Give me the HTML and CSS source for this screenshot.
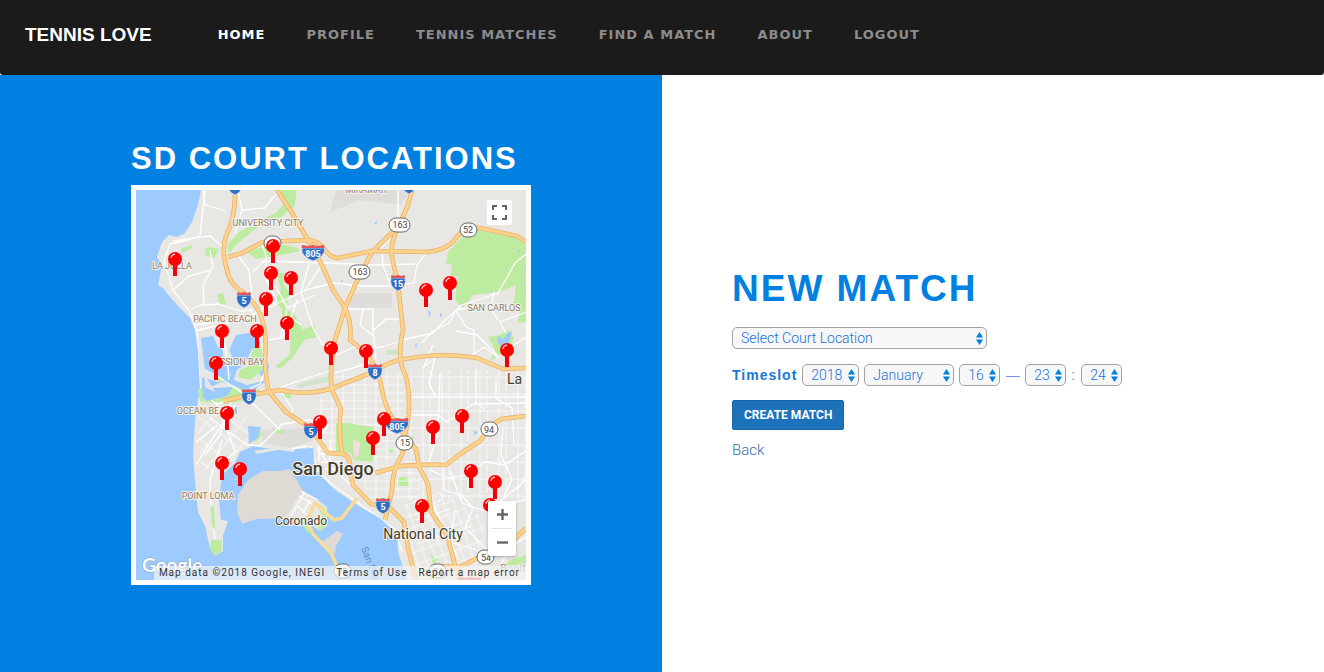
FILE: index.html
```html
<!DOCTYPE html>
<html lang="en">
<head>
<meta charset="utf-8">
<meta name="viewport" content="width=device-width, initial-scale=1">
<title>Tennis Love</title>
<link rel="stylesheet" href="styles.css">
</head>
<body>
<header class="navbar">
  <a class="brand" href="#">TENNIS LOVE</a>
  <nav class="nav-links">
    <a class="nav-link active" href="#">HOME</a>
    <a class="nav-link" href="#">PROFILE</a>
    <a class="nav-link" href="#">TENNIS MATCHES</a>
    <a class="nav-link" href="#">FIND A MATCH</a>
    <a class="nav-link" href="#">ABOUT</a>
    <a class="nav-link" href="#">LOGOUT</a>
  </nav>
</header>
<main class="split">
  <section class="panel courts">
    <div class="courts-inner">
      <h2 class="courts-title">SD COURT LOCATIONS</h2>
      <div class="map">
        <svg class="map-canvas" viewBox="136 190 390 390" role="img" aria-label="Map of San Diego courts">
          <defs>
            <pattern id="grid" width="11" height="8" patternUnits="userSpaceOnUse"><path d="M0 1H11M2 0V8" class="street thin"/></pattern>
            <pattern id="blocks" width="19" height="17" patternUnits="userSpaceOnUse"><path d="M0 3H19M5 0V17M12 3V17" class="street thin"/></pattern>
            <pattern id="tilt" width="9" height="12" patternUnits="userSpaceOnUse" patternTransform="rotate(-20)"><path d="M0 1H9M2 0V12" class="street thin"/></pattern>
            <pattern id="diag" width="14" height="17" patternUnits="userSpaceOnUse" patternTransform="rotate(38)"><path d="M0 2H14M3 0V17" class="street thin"/></pattern>
            <g id="pin"><path d="M0 5V17" stroke="#f0000c" stroke-width="4"/><circle r="7" fill="#f00"/><path d="M-4-1Q-4-4 0-5" fill="none" stroke="#ffc4c4" stroke-width="1.3"/></g>
            <g id="shield"><path d="M-7-4H7Q9 5 0 9Q-9 5-7-4Z" fill="#2f70c5" stroke="#e8edf5" stroke-width=".7"/><path d="M-6.5-7L-3.5-6L0-7L3.5-6L6.500-7L7-4H-7Z" fill="#e2535a"/></g>
            <g id="wide-shield"><path d="M-11-4H11.500Q13 4 0 9Q-13 4-11-4Z" fill="#2f70c5" stroke="#e8edf5" stroke-width=".7"/><path d="M-11-7L-5-6L0-7L5-6L11-7L11.500-4H-11.500Z" fill="#e2535a"/></g>
            <g id="highways">
              <path d="M235 190Q236 215 226 236Q221 250 227 270Q229 284 243 292Q260 306 264 327Q267 340 265 360Q266 382 269 392L286 412L310 428L328 453L342 454Q351 455 350 469L353 485L371 504L389 507L404 522L408 548L416 580"/>
              <path d="M228 257L242 253L263 242L308 240Q320 241 325 250Q331 258 338 258L372 251L427 252Q448 250 456 238Q464 227 480 228L517 236L526 242"/>
              <path d="M277 190L292 213L308 240L322 265L333 290L345 308Q352 322 350 340Q366 352 370 358Q380 374 382 390Q387 414 396 422L405 437L416 449L419 467L428 484L431 512L447 535L455 565L460 580"/>
              <path d="M412 190L408 205L398 228Q390 244 392 257L398 285L403 330Q398 352 402 367Q409 380 409 400Q410 423 402 443L403 453Q392 470 392 490L385 520"/>
              <path d="M400 225L372 252L355 285L345 308L335 340Q329 375 332 390L341 409Q338 430 342 455"/>
              <path d="M223 401L245 396L280 390Q303 396 330 389L353 380L373 372Q392 360 405 359Q444 352 477 358L503 369L526 368"/>
              <path d="M375 473L400 466Q435 464 446 465L463 452L480 441L492 425L501 419L526 416"/>
              <path d="M426 573L443 566L460 567L481 556L505 548L526 528"/>
            </g>
          </defs>
          <rect x="136" y="190" width="390" height="390" fill="#e8e7e4"/>
          <g fill="#deddda">
            <path d="M336 190H412L400 205L360 200L330 212Z M350 293H392V308H350Z M262 430L304 428L313 440L290 448L262 443Z"/>
          </g>
          <!-- parks -->
          <g fill="#bdeb9f">
            <path d="M448 252L463 236L476 230L517 238L527 246V254L523 262L498 292L473 295L463 308L455 300L458 276L451 276L452 264L446 264Z"/>
            <path d="M517 240L526 246V322L518 323L520 310L513 309L516 285L500 292Z"/>
            <path d="M488 337L500 335L509 330L514 338L510 348L499 355L490 361L495 350Z"/>
            <path d="M336 423H348L373 427V462L354 460L351 453L336 451Z"/>
            <path d="M288 210L294 208L297 190H275L284 204L276 213L262 219L282 217Z"/>
            <path d="M227 245L240 231L252 226L258 227L238 243L229 254Z M247 252L262 247L287 245L297 248L300 251L287 254L256 259Z"/>
            <path d="M277 273L284 273L283 283L290 294L285 308L294 314L303 330L314 324L317 337L304 340L293 357L280 369L276 366L290 354L291 333L282 324L282 309L275 301L281 290Z"/>
            <path d="M181 249L191 245L192 248L182 253Z M205 249L210 247L219 249L214 258L206 256Z M217 295L223 293L226 305L220 304Z"/>
            <path d="M398 477H409V486H398Z M398 440L408 434L407 440L415 435L410 442Z M385 449L395 448L392 453Z"/>
            <path d="M253 440L260 431L263 433L256 443Z M273 428L285 431L284 434L273 432Z M510 560L526 555V572L505 566Z M430 554L439 560L434 566Z"/>
            <path d="M203 402L222 388L246 386L260 390V396L228 404Z M282 394H291V398H283Z"/>
          </g>
          <path d="M353 439L360 443L359 455L354 458Z" fill="#f3dde2"/>
          <path d="M387 350H400V355H386Z M297 384L330 376V381L299 388Z" fill="#cfe3cd"/>
          <!-- minor streets -->
          <path d="M336 372H404V463H374V427L336 422Z" fill="url(#grid)"/>
          <path d="M405 370H526V500H405Z" fill="url(#blocks)"/>
          <path d="M320 397H336V455L315 447Z M355 465H420V500H370Z" fill="url(#grid)"/>
          <path d="M404 505L440 492L486 520L480 567H414Z" fill="url(#tilt)"/>
          <path d="M197 418L225 397L259 425L240 450L222 475L202 470Z M303 492L329 498L325 521L308 522L295 507Z" fill="url(#diag)"/>
          <g class="street">
            <path d="M205 190L200 236L188 240L170 244L164 261L173 290L190 312L197 332L200 390"/>
            <path d="M173 241L210 236L224 248M226 211L205 205L203 190M238 190L242 210L265 208L279 190M242 210L235 233"/>
            <path d="M210 250L213 267L203 285L204 304L191 309M210 270L189 276L173 290M204 305L219 304L240 311L253 310"/>
            <path d="M195 325L232 320L254 315L280 302L306 290L333 283L362 286L390 286L414 283L417 265L427 252"/>
            <path d="M194 331L229 323M222 339L225 380M225 364L209 373M235 252L249 270L253 302M253 272L264 261L330 263L372 265L415 264"/>
            <path d="M262 245L266 255L266 272L281 296L287 308L315 295M309 265L301 292L313 328L323 345M323 263L304 292"/>
            <path d="M264 275L277 301L250 315M267 340L282 338L289 325M287 310L280 338M298 299L291 317L301 325"/>
            <path d="M398 190V228L382 247L383 265L390 284M352 285L344 309H373V331L386 319H402M373 330L376 358L360 366L335 373"/>
            <path d="M363 310L360 325L373 336M333 293L350 318M336 355L355 347L363 349L383 347L402 340L433 333L447 318L462 305L498 293L515 263L526 254"/>
            <path d="M422 343L433 331L449 323L456 310L480 305L491 310L500 322L506 333M433 345L423 369M456 311L466 327L474 330V353M456 331L477 335L498 356"/>
            <path d="M491 308L494 292M500 322L526 312M507 350L526 337M472 355L484 347L499 358M422 368L435 358L429 383L436 398"/>
            <path d="M269 392L295 382L330 371M217 372L204 360M216 373L240 391L280 430M200 390L216 404L269 392M216 402L235 451"/>
            <path d="M210 418L247 445L260 446L282 424L310 420L328 427L316 440M280 390L293 410L289 416M231 402L220 435L205 455"/>
            <path d="M218 425L196 442M235 405L215 435L196 465M222 440L210 480L211 510L215 539M237 450L222 464M253 447L284 450L308 446"/>
            <path d="M310 445L317 470L331 484L350 497L378 517L395 529L402 552M317 448L330 466L350 484L378 508"/>
            <path d="M321 462H340M320 454H336M325 469H344M319 439L319 461M330 439V470"/>
            <path d="M430 470L448 478L466 475L485 462L505 465L526 451M444 463V490L461 495L473 508L465 528L487 550"/>
            <path d="M503 427L501 455L512 479L500 505L526 500M405 415H438L447 422L473 404L526 403M412 397H526M440 374L438 433L428 465"/>
            <path d="M476 369V403L485 409M496 380V398L512 408L514 445M450 470L462 503L487 512L526 480M455 510L450 542L476 550"/>
            <path d="M517 490L526 476M500 565L512 546L526 537M441 500L433 504L459 560M416 520L450 509M417 544L471 526"/>
          </g>
          <!-- ocean and bays -->
          <g fill="#9dcaff">
            <path d="M136 190H201L198 205L192 222L185 233L177 237L169 235L162 242L157 257L162 265L158 285L164 289L170 297L180 308L190 318L195 330L198 350L200 388L195 420L193 455L195 482L198 512L205 526L210 548L215 556L223 551L223 536L228 521L221 520L219 500L222 475L235 463L240 452L253 446L282 450L313 448L315 470L335 490L362 508L380 518L397 534L398 552L407 580H136Z"/>
            <path d="M201 338L213 336L218 347L223 350L224 362L231 377L220 380L205 370Z"/>
            <path d="M229 350L236 335L249 333L260 340L261 347L252 349L245 364L237 370L234 380L247 385L267 380L259 374L264 355L269 366L266 381L251 392L222 382L202 391V377L218 382L231 375L224 363L232 356Z"/>
            <path d="M248 426L261 427L258 438L249 444Z M136 392L233 387L227 396L207 401L197 395Z"/>
            <path d="M341 280L343 279L342 283ZM428 310L431 313L429 318ZM440 313L443 315L440 317ZM415 344L417 343L416 349ZM473 431L478 432L475 435ZM499 336L503 340L507 334L512 331L508 345L501 347L497 341Z"/>
            <path d="M374 223L377 221L376 225ZM518 250L520 250L519 253Z"/>
          </g>
          <g fill="#bdeb9f">
            <path d="M262 342L263 370L250 380L238 377L240 370L249 366L249 360L254 348Z M214 374L225 379L220 383Z"/>
            <path d="M211 540L222 540L221 551L215 556L210 549Z M210 505L214 507L215 530L212 526Z M198 389L200 401L204 404L202 388Z"/>
          </g>
          <path d="M202 336L205 387L215 392L204 374Z" fill="#e8e7e4"/>
          <path d="M222 330L227 358L229 380M205 370L217 376L244 394M258 333L267 366L260 384L249 389" class="street"/>
          <path d="M254 451L278 447L295 449L294 452L278 450L257 454Z" fill="#e8e7e4"/>
          <!-- Coronado -->
          <path d="M290 469L281 471L263 471L248 480L238 495L237 512L242 524L257 519L285 518L292 510L303 491Z" fill="#dfdad4"/>
          <path d="M303 491L318 500L327 507V526L320 531L310 524L300 526L286 517L293 505Z" fill="#e8e7e4"/>
          <path d="M316 502L325 508L327 525L320 531L316 525L323 518Z M300 522L306 522L312 531L309 534Z" fill="#bdeb9f"/>
          <path d="M322 542L337 531L343 534L336 546L335 554L326 547Z" fill="#dfdad4"/>
          <path d="M301 491L318 500M299 496L314 505M304 493L291 516M298 506L309 517M310 500L303 513" class="street"/>
          <path d="M235 480L246 472" stroke="#bdeb9f" stroke-width="1.500"/>
          <!-- highways: casing below, core above -->
          <use href="#highways" class="road-casing"/>
          <use href="#highways" class="road-core"/>
          <path d="M357 498L342 518L334 520L315 503L307 520L313 534L331 553L341 575" fill="none" stroke="#f7dd98" stroke-width="3.500"/>
          <!-- route markers -->
          <use href="#shield" x="235" y="186"/><use href="#shield" x="409" y="185"/>
          <use href="#shield" x="244" y="299"/><use href="#shield" x="398" y="282"/><use href="#shield" x="375" y="371"/><use href="#shield" x="249" y="396"/><use href="#shield" x="311" y="430"/><use href="#shield" x="383" y="505"/>
          <use href="#wide-shield" x="313" y="252"/><use href="#wide-shield" x="397" y="425"/><use href="#wide-shield" x="470" y="584"/>
          <g class="shield-text">
            <text x="244" y="304">5</text><text x="398" y="287">15</text><text x="375" y="376">8</text><text x="249" y="401">8</text><text x="311" y="435">5</text><text x="383" y="510">5</text><text x="313" y="257">805</text><text x="397" y="430">805</text>
          </g>
          <g class="route-badge">
            <rect x="389" y="218" width="21" height="14" rx="7"/><rect x="349" y="265" width="21" height="14" rx="7"/><rect x="460" y="223" width="17" height="14" rx="7"/><rect x="264" y="236" width="17" height="14" rx="7"/><rect x="481" y="422" width="17" height="14" rx="7"/><rect x="396" y="436" width="17" height="14" rx="7"/><rect x="477" y="550" width="17" height="14" rx="7"/><rect x="334" y="564" width="17" height="14" rx="7"/><rect x="429" y="564" width="17" height="14" rx="7"/>
          </g>
          <g class="route-text">
            <text x="400" y="228">163</text><text x="360" y="275">163</text><text x="468" y="233">52</text><text x="489" y="433">94</text><text x="405" y="446">15</text><text x="486" y="561">54</text><text x="342" y="575">75</text><text x="438" y="575">54</text>
          </g>
          <g class="area-label">
            <text x="366" y="193">MIRAMAR</text><text x="268" y="226">UNIVERSITY CITY</text><text x="172" y="269">LA JOLLA</text><text x="225" y="322">PACIFIC BEACH</text><text x="237" y="365">MISSION BAY</text><text x="207" y="414">OCEAN BEACH</text><text x="208" y="499">POINT LOMA</text><text x="494" y="311">SAN CARLOS</text>
          </g>
          <g class="city-label">
            <text x="507" y="384" class="city-start">La</text><text x="301" y="525" class="city-small">Coronado</text><text x="423" y="539">National City</text><text x="333" y="475" class="city-main">San Diego</text><text x="500" y="572" class="city-start bonita">Bonita</text>
          </g>
          <text class="water-label" transform="translate(361 548) rotate(70)">San Diego Bay</text>
          <text x="142" y="572" class="google-mark">Google</text>
          <!-- court pins -->
          <use href="#pin" x="490" y="505"/><use href="#pin" x="175" y="259"/><use href="#pin" x="273" y="246"/><use href="#pin" x="271" y="273"/><use href="#pin" x="291" y="278"/><use href="#pin" x="266" y="299"/><use href="#pin" x="287" y="323"/><use href="#pin" x="222" y="331"/><use href="#pin" x="257" y="331"/><use href="#pin" x="216" y="363"/><use href="#pin" x="331" y="348"/><use href="#pin" x="366" y="351"/><use href="#pin" x="426" y="290"/><use href="#pin" x="450" y="283"/><use href="#pin" x="507" y="350"/><use href="#pin" x="227" y="413"/><use href="#pin" x="222" y="463"/><use href="#pin" x="240" y="469"/><use href="#pin" x="320" y="422"/><use href="#pin" x="384" y="419"/><use href="#pin" x="373" y="438"/><use href="#pin" x="433" y="427"/><use href="#pin" x="462" y="416"/><use href="#pin" x="471" y="471"/><use href="#pin" x="495" y="482"/><use href="#pin" x="422" y="506"/>
        </svg>
        <button class="map-button fullscreen" type="button" aria-label="Toggle fullscreen">
          <svg width="17" height="17" viewBox="0 0 17 17"><path d="M2 6V2H6M11 2H15V6M15 11V15H11M6 15H2V11" fill="none" stroke="#666" stroke-width="2"/></svg>
        </button>
        <div class="zoom">
          <button class="map-button zoom-button" type="button" aria-label="Zoom in"><svg width="11" height="11" viewBox="0 0 11 11"><path d="M0 5.500H11M5.500 0V11" stroke="#666" stroke-width="2.400"/></svg></button>
          <button class="map-button zoom-button" type="button" aria-label="Zoom out"><svg width="11" height="11" viewBox="0 0 11 11"><path d="M0 5.500H11" stroke="#666" stroke-width="2.400"/></svg></button>
        </div>
        <div class="attribution">
          <span>Map data ©2018 Google, INEGI</span><a href="#">Terms of Use</a><a href="#">Report a map error</a>
        </div>
      </div>
    </div>
  </section>
  <section class="panel match">
    <form class="match-form">
      <h1 class="match-title">NEW MATCH</h1>
      <span class="select-box court"><select aria-label="Court location"><option>Select Court Location</option></select><svg class="arrows" viewBox="0 0 7 13"><path d="M3.500 0L7 5.500H0ZM3.500 13L0 7.500H7Z"/></svg></span>
      <div class="timeslot">
        <label class="timeslot-label" for="year">Timeslot</label>
        <span class="select-box year"><select id="year"><option>2018</option></select><svg class="arrows" viewBox="0 0 7 13"><path d="M3.500 0L7 5.500H0ZM3.500 13L0 7.500H7Z"/></svg></span>
        <span class="select-box month"><select aria-label="Month"><option>January</option></select><svg class="arrows" viewBox="0 0 7 13"><path d="M3.500 0L7 5.500H0ZM3.500 13L0 7.500H7Z"/></svg></span>
        <span class="select-box short"><select aria-label="Day"><option>16</option></select><svg class="arrows" viewBox="0 0 7 13"><path d="M3.500 0L7 5.500H0ZM3.500 13L0 7.500H7Z"/></svg></span>
        <span class="separator dash">—</span>
        <span class="select-box short"><select aria-label="Hour"><option>23</option></select><svg class="arrows" viewBox="0 0 7 13"><path d="M3.500 0L7 5.500H0ZM3.500 13L0 7.500H7Z"/></svg></span>
        <span class="separator">:</span>
        <span class="select-box short"><select aria-label="Minute"><option>24</option></select><svg class="arrows" viewBox="0 0 7 13"><path d="M3.500 0L7 5.500H0ZM3.500 13L0 7.500H7Z"/></svg></span>
      </div>
      <button class="create" type="submit">CREATE MATCH</button>
      <a class="back" href="#">Back</a>
    </form>
  </section>
</main>
</body>
</html>
```
FILE: styles.css
```css
* { box-sizing: border-box; }
body {
  margin: 0;
  background: #fff;
  font-family: "Liberation Sans", Arial, sans-serif;
  color: #0080e0;
}
a { text-decoration: none; }

.navbar {
  display: flex;
  align-items: center;
  gap: 66px;
  min-height: 75px;
  padding: 0 25px 6px;
  background: #1b1b1b;
  border-radius: 0 0 3px 3px;
}
.brand { color: #fff; font-size: 19px; font-weight: bold; white-space: nowrap; }
.nav-links { display: flex; flex-wrap: wrap; gap: 4px 41px; }
.nav-link {
  color: #8c8c8c;
  font-family: "DejaVu Sans", Verdana, sans-serif;
  font-size: 13px;
  font-weight: bold;
  letter-spacing: 1px;
  white-space: nowrap;
}
.nav-link.active { color: #fff; }

.split { display: grid; grid-template-columns: 1fr 1fr; min-height: calc(100vh - 75px); }
.courts { background: #0080e0; padding: 66px 20px 40px; }
.courts-inner { max-width: 400px; margin: 0 auto; }
.courts-title {
  margin: 0 0 8px;
  color: #fff;
  font-size: 31px;
  line-height: 36px;
  letter-spacing: 2px;
  white-space: nowrap;
}
.map { position: relative; border: 5px solid #fff; overflow: hidden; }
.map-canvas { display: block; width: 100%; height: auto; font-family: Roboto, sans-serif; }

.street { fill: none; stroke: #fff; stroke-width: 1.3px; stroke-linejoin: round; }
.street.thin { stroke-width: 0.7px; }
.road-casing { fill: none; stroke: #e9b06c; stroke-width: 4.6px; stroke-linejoin: round; }
.road-core { fill: none; stroke: #fdd38c; stroke-width: 3px; stroke-linejoin: round; }
.shield-text { fill: #fff; font-size: 9px; font-weight: bold; text-anchor: middle; }
.route-badge { fill: #fff; stroke: #666; stroke-width: 1px; }
.route-text { fill: #444; font-size: 9px; text-anchor: middle; }
.area-label, .city-label { text-anchor: middle; paint-order: stroke; stroke: #f5f4f1; stroke-width: 2px; stroke-linejoin: round; }
.area-label { fill: #94795d; font-size: 9px; }
.city-label { fill: #443d2b; font-size: 14px; }
.city-start { text-anchor: start; }
.city-small { font-size: 12px; }
.city-main { font-size: 18px; font-weight: 500; }
.bonita { font-size: 11px; fill: #8a8474; }
.water-label { fill: #5b91d3; font-size: 10px; }
.google-mark { fill: #fff; font-family: Lato, sans-serif; font-size: 19px; font-weight: bold; paint-order: stroke; stroke: #7d9cc0; stroke-width: 1px; }

.map-button { display: flex; align-items: center; justify-content: center; padding: 0; border: 0; background: #fff; }
.fullscreen { position: absolute; top: 10px; right: 14px; width: 25px; height: 25px; border-radius: 2px; }
.zoom {
  position: absolute;
  right: 10px;
  bottom: 24px;
  width: 28px;
  padding: 0 4px;
  background: #fff;
  border-radius: 2px;
  box-shadow: 0 1px 3px rgba(0, 0, 0, 0.3);
}
.zoom-button { width: 20px; height: 27px; }
.zoom-button + .zoom-button { height: 28px; border-top: 1px solid #e0e0e0; }
.attribution {
  position: absolute;
  right: 0;
  bottom: 0;
  display: flex;
  gap: 11px;
  padding: 0 6px 0 5px;
  background: rgba(245, 245, 245, 0.7);
  color: #333;
  font-family: Roboto, sans-serif;
  font-size: 10px;
  line-height: 14px;
  letter-spacing: 1px;
  white-space: nowrap;
}
.attribution a { color: #333; }

.match { padding: 193px 20px 40px 70px; }
.match-form { display: flex; flex-direction: column; align-items: flex-start; }
.match-title { margin: 0 0 18px; font-size: 37px; line-height: 41px; letter-spacing: 2px; }
.select-box { position: relative; display: inline-flex; height: 22px; }
.select-box select {
  appearance: none;
  width: 100%;
  padding: 0 0 0 8px;
  border: 1px solid #a3a3a3;
  border-radius: 5px;
  background: #f7f7f7;
  color: #2070dc;
  font-family: Roboto, sans-serif;
  font-size: 14px;
  font-weight: 300;
}
.arrows { position: absolute; right: 4px; top: 5px; width: 7px; height: 13px; fill: #0080e0; pointer-events: none; }
.court { width: 255px; max-width: 100%; margin-bottom: 15px; }
.timeslot { display: flex; flex-wrap: wrap; align-items: center; gap: 5px; margin-bottom: 14px; }
.timeslot-label { color: #1878d8; font-size: 14px; font-weight: bold; letter-spacing: 1px; }
.year { width: 57px; }
.month { width: 90px; }
.short { width: 41px; }
.separator { width: 5px; font-size: 14px; color: #7f8fe0; }
.dash { width: 15px; text-align: center; }
.create {
  height: 30px;
  margin-bottom: 11px;
  padding: 0 11px;
  border: 1px solid #1a65a5;
  border-radius: 2px;
  background: #1d73ba;
  color: #fff;
  font-family: Roboto, sans-serif;
  font-size: 12px;
  font-weight: bold;
}
.back { color: #3a6ca8; font-family: Roboto, sans-serif; font-size: 15px; font-weight: 300; line-height: 18px; }
```
